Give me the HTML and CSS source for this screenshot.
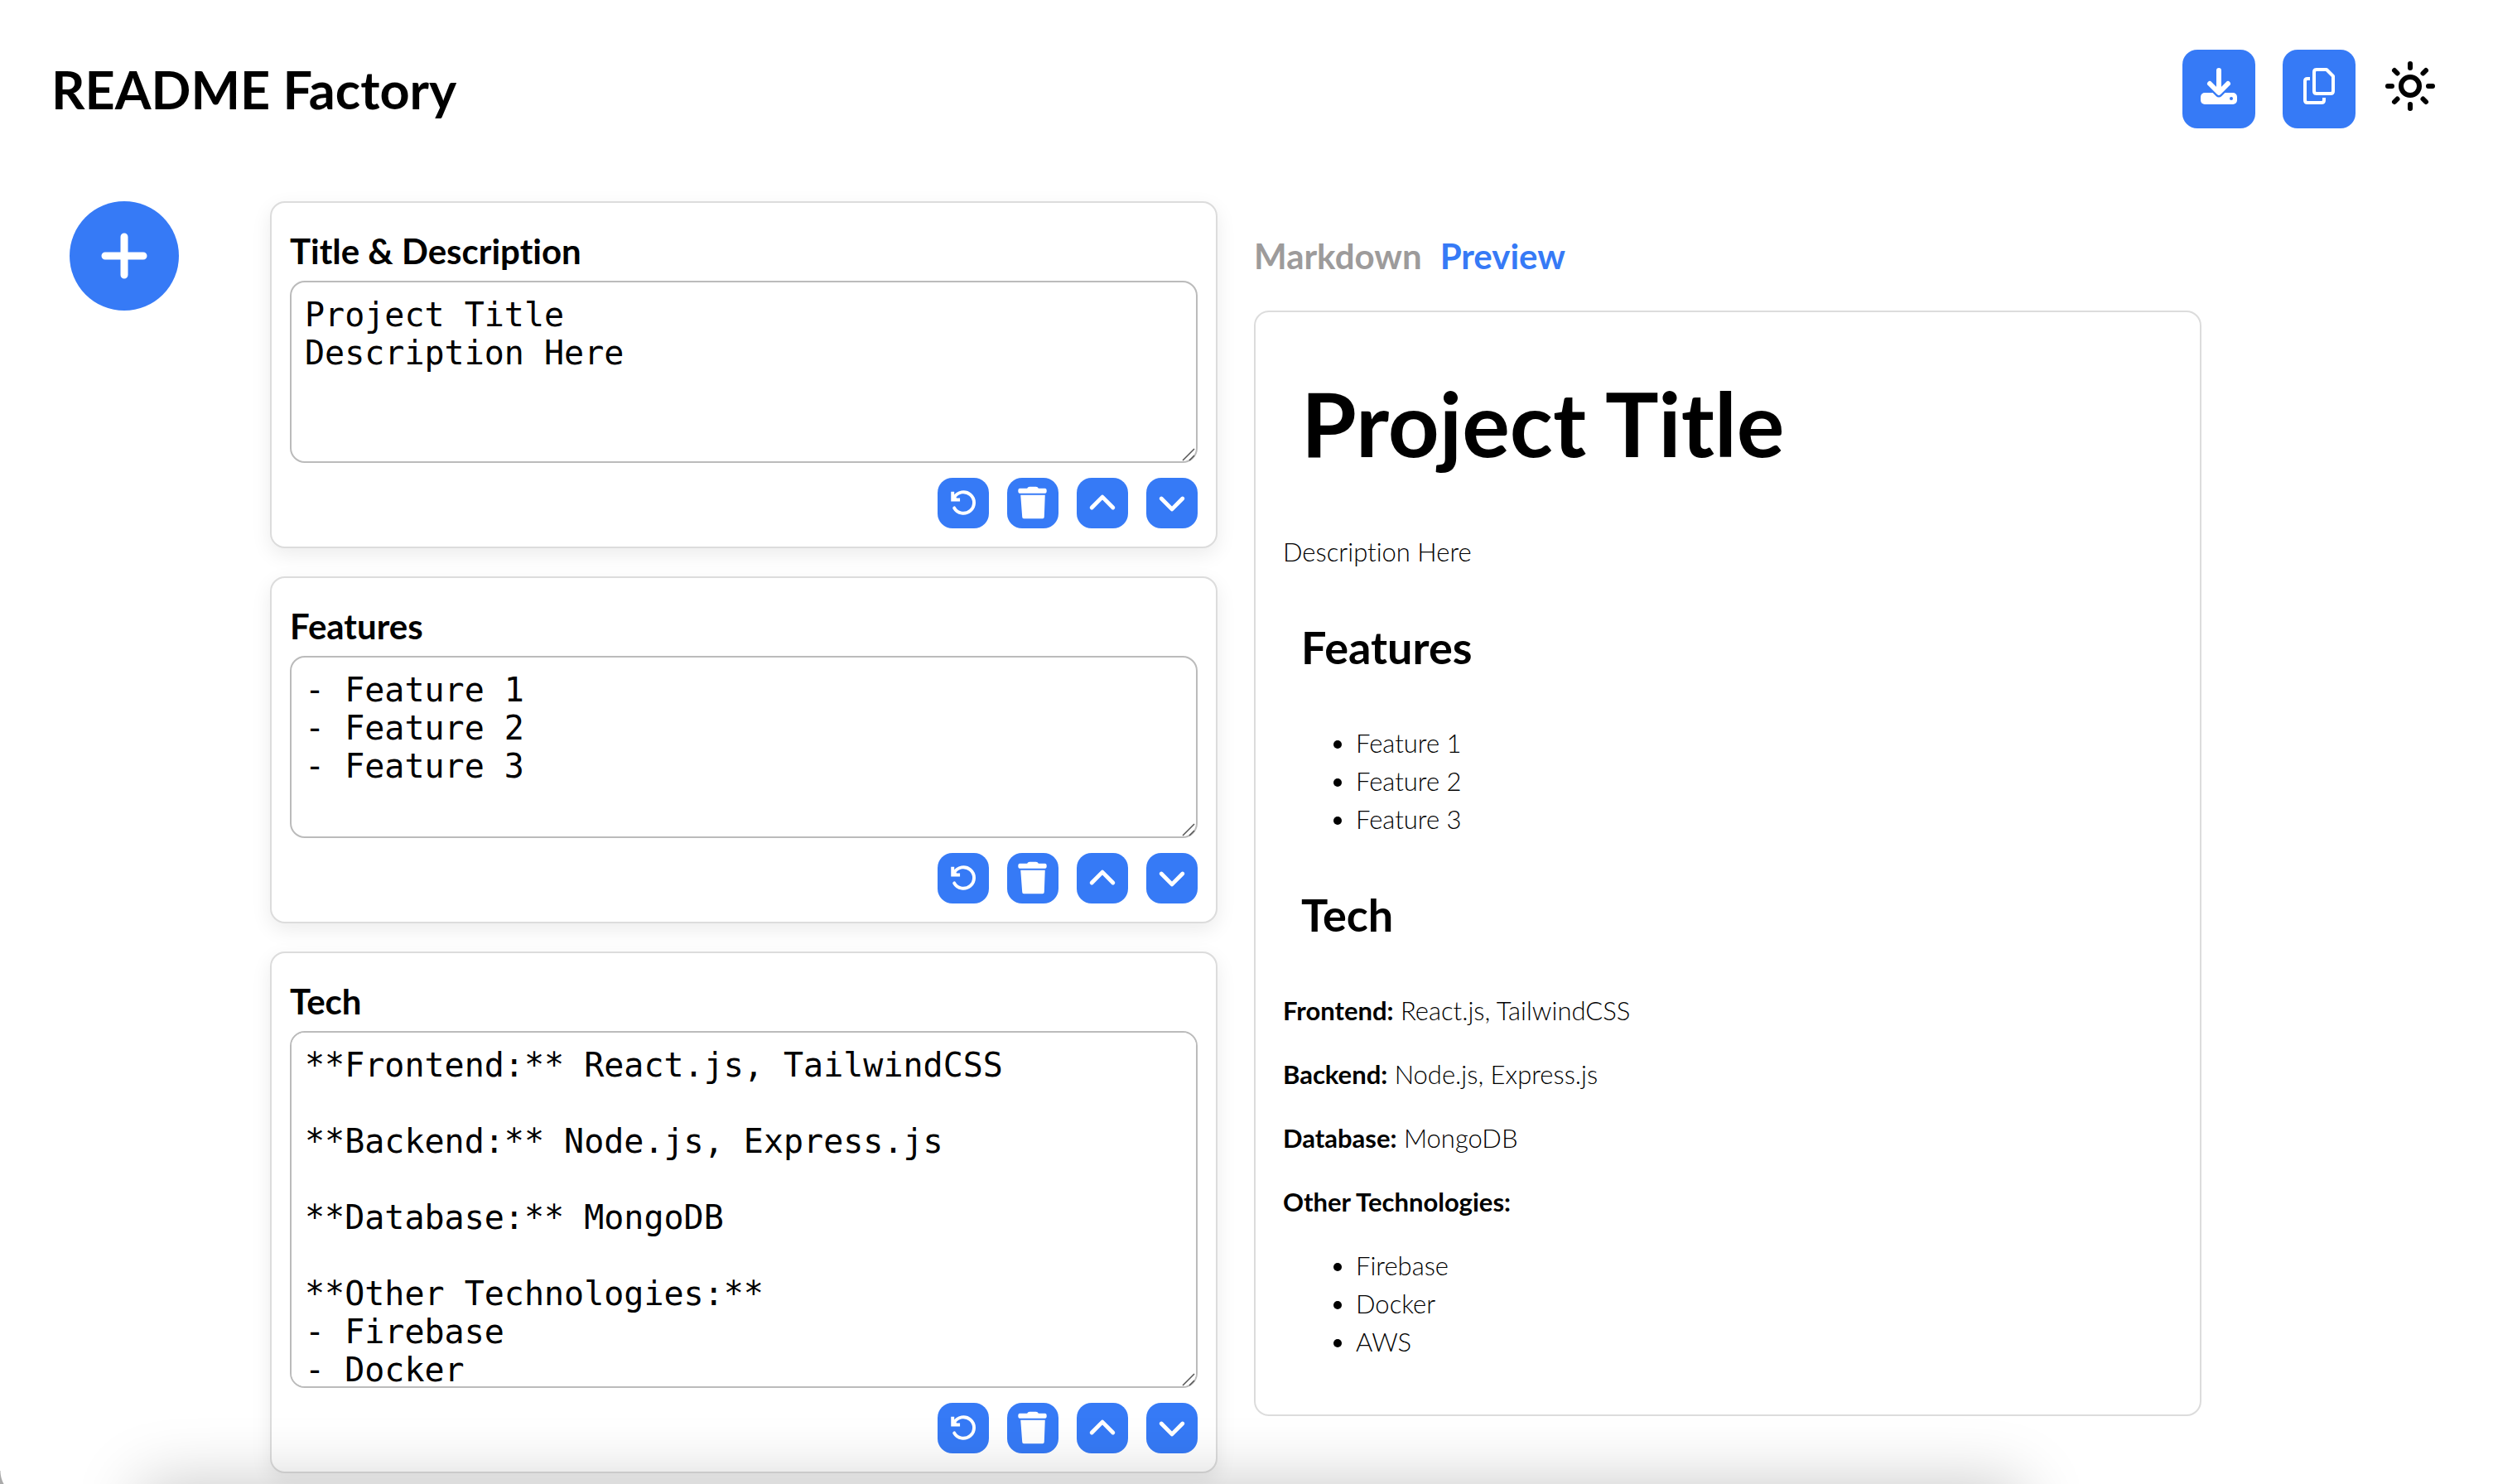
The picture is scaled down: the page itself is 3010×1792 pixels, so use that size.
FILE: index.html
```html
<!DOCTYPE html>
<html lang="en">
<head>
<meta charset="utf-8">
<meta name="viewport" content="width=device-width, initial-scale=1">
<title>README Factory</title>
<link rel="stylesheet" href="styles.css">
</head>
<body>
<svg class="sprite" aria-hidden="true">
  <symbol id="reset" viewBox="0 0 62 62">
    <path d="M20 37a13 13 0 1 0 0-13" fill="none" stroke="currentColor" stroke-width="4" stroke-linecap="round"/>
    <path d="M16 17h4v5l3 3h4v4H16z" fill="currentColor"/>
  </symbol>
  <symbol id="trash" viewBox="0 0 62 62">
    <path d="M15 13h9q1-2 3-2h8q2 0 3 2h8q2 0 2 3t-2 3H15q-2 0-2-3t2-3zM16 21h30l-1 27q0 2-2 2H20q-2 0-2-2z" fill="currentColor"/>
  </symbol>
  <symbol id="up" viewBox="0 0 62 62">
    <path d="M18 36.500 31 23.500 44 36.500" fill="none" stroke="currentColor" stroke-width="5" stroke-linecap="round" stroke-linejoin="round"/>
  </symbol>
  <symbol id="down" viewBox="0 0 62 62">
    <path d="M18 25.500 31 38.500 44 25.500" fill="none" stroke="currentColor" stroke-width="5" stroke-linecap="round" stroke-linejoin="round"/>
  </symbol>
  <symbol id="grip" viewBox="0 0 16 16">
    <path d="M1 15 15 1M9 15l6-6" fill="none" stroke="#555" stroke-width="1.500"/>
  </symbol>
</svg>

<header class="header">
  <h1 class="brand">README Factory</h1>
  <div class="actions">
    <button class="action" type="button" aria-label="Download">
      <svg viewBox="0 0 44 44">
        <rect x="0" y="30" width="44" height="14" rx="5" fill="currentColor"/>
        <path class="cutout" d="M11 20l11 11 11-11" fill="none" stroke-width="9" stroke-linejoin="round"/>
        <path d="M22 3v26M11 19l11 11 11-11" fill="none" stroke="currentColor" stroke-width="6" stroke-linecap="round" stroke-linejoin="round"/>
        <circle class="dot" cx="37" cy="37" r="2"/>
      </svg>
    </button>
    <button class="action" type="button" aria-label="Copy">
      <svg viewBox="0 0 44 44">
        <path d="M19 2h12l8 8v18q0 3-3 3H19q-3 0-3-3V5q0-3 3-3zM11 13H8q-3 0-3 3v23q0 3 3 3h17q3 0 3-3v-3" fill="none" stroke="currentColor" stroke-width="4" stroke-linejoin="round"/>
      </svg>
    </button>
    <button class="theme" type="button" aria-label="Toggle theme">
      <svg viewBox="-30 -30 60 60" fill="none" stroke="currentColor" stroke-linecap="round">
        <circle r="11" stroke-width="6"/>
        <path d="M0-27v5M0 27v-5M-27 0h5M27 0h-5M-19-19l3.500 3.500M19-19l-3.500 3.500M-19 19l3.500-3.500M19 19l-3.500-3.500" stroke-width="6"/>
      </svg>
    </button>
  </div>
</header>

<main class="workspace">
  <button class="add" type="button" aria-label="Add section">
    <svg viewBox="0 0 132 132"><path d="M66 43v46M43 66h46" stroke="currentColor" stroke-width="9" stroke-linecap="round"/></svg>
  </button>

  <div class="editor">
    <section class="card">
      <label class="card-title" for="intro">Title &amp; Description</label>
      <div class="field">
        <textarea id="intro" rows="4" spellcheck="false">Project Title
Description Here</textarea>
        <svg class="grip" aria-hidden="true"><use href="#grip"/></svg>
      </div>
      <div class="tools">
        <button type="button" aria-label="Reset"><svg><use href="#reset"/></svg></button>
        <button type="button" aria-label="Delete"><svg><use href="#trash"/></svg></button>
        <button type="button" aria-label="Move up"><svg><use href="#up"/></svg></button>
        <button type="button" aria-label="Move down"><svg><use href="#down"/></svg></button>
      </div>
    </section>

    <section class="card">
      <label class="card-title" for="features">Features</label>
      <div class="field">
        <textarea id="features" rows="4" spellcheck="false">- Feature 1
- Feature 2
- Feature 3</textarea>
        <svg class="grip" aria-hidden="true"><use href="#grip"/></svg>
      </div>
      <div class="tools">
        <button type="button" aria-label="Reset"><svg><use href="#reset"/></svg></button>
        <button type="button" aria-label="Delete"><svg><use href="#trash"/></svg></button>
        <button type="button" aria-label="Move up"><svg><use href="#up"/></svg></button>
        <button type="button" aria-label="Move down"><svg><use href="#down"/></svg></button>
      </div>
    </section>

    <section class="card">
      <label class="card-title" for="tech">Tech</label>
      <div class="field">
        <textarea id="tech" class="tall" spellcheck="false">**Frontend:** React.js, TailwindCSS

**Backend:** Node.js, Express.js

**Database:** MongoDB

**Other Technologies:**
- Firebase
- Docker
- AWS</textarea>
        <svg class="grip" aria-hidden="true"><use href="#grip"/></svg>
      </div>
      <div class="tools">
        <button type="button" aria-label="Reset"><svg><use href="#reset"/></svg></button>
        <button type="button" aria-label="Delete"><svg><use href="#trash"/></svg></button>
        <button type="button" aria-label="Move up"><svg><use href="#up"/></svg></button>
        <button type="button" aria-label="Move down"><svg><use href="#down"/></svg></button>
      </div>
    </section>
  </div>

  <div class="output">
    <div class="tabs">
      <button class="tab" type="button">Markdown</button>
      <button class="tab active" type="button">Preview</button>
    </div>
    <article class="preview">
      <h1>Project Title</h1>
      <p>Description Here</p>
      <h2>Features</h2>
      <ul>
        <li>Feature 1</li>
        <li>Feature 2</li>
        <li>Feature 3</li>
      </ul>
      <h2>Tech</h2>
      <p><strong>Frontend:</strong> React.js, TailwindCSS</p>
      <p><strong>Backend:</strong> Node.js, Express.js</p>
      <p><strong>Database:</strong> MongoDB</p>
      <p><strong>Other Technologies:</strong></p>
      <ul>
        <li>Firebase</li>
        <li>Docker</li>
        <li>AWS</li>
      </ul>
    </article>
  </div>
</main>
<div class="dock-shadow" aria-hidden="true"></div>
<div class="window-corner" aria-hidden="true"></div>
</body>
</html>
```

FILE: styles.css
```css
:root {
  --accent: #367af6;
  --line: #dcdcdc;
  --radius: 18px;
}

* { box-sizing: border-box; }

html { overflow: hidden; }

body {
  margin: 0;
  background: #fff;
  color: #000;
  font-family: Lato, "Liberation Sans", sans-serif;
  font-size: 31px;
  font-variant-ligatures: none;
  line-height: 46px;
}

button {
  padding: 0;
  border: 0;
  background: none;
  color: inherit;
  font: inherit;
  cursor: pointer;
}

svg { display: block; }
.sprite { display: none; }

/* Header */
.header {
  display: flex;
  align-items: center;
  justify-content: space-between;
  padding: 60px 70px 0 62px;
}

.brand {
  margin: 0;
  font-size: 63px;
  line-height: 76px;
  font-weight: 700;
}

.actions {
  display: flex;
  align-items: flex-start;
  gap: 33px;
}

.action {
  padding: 22px 22px 29px;
  border-radius: var(--radius);
  background: var(--accent);
  color: #fff;
}

.action svg { width: 44px; height: 44px; }
.cutout { stroke: var(--accent); }
.dot { fill: var(--accent); }

.theme { padding: 14px 0 0 3px; }
.theme svg { width: 60px; height: 60px; }

/* Workspace */
.workspace {
  display: grid;
  grid-template-columns: 198px minmax(0, 1fr) minmax(0, 1fr);
  column-gap: 44px;
  align-items: start;
  padding: 88px 352px 14px 84px;
}

.add {
  width: 132px;
  height: 132px;
  border-radius: 50%;
  background: var(--accent);
  color: #fff;
}

.editor {
  display: grid;
  gap: 34px;
}

.card {
  padding: 33px 22px 22px;
  border: 2px solid var(--line);
  border-radius: var(--radius);
  background: #fff;
  box-shadow: 0 8px 24px rgba(0, 0, 0, 0.08);
}

.card-title {
  display: block;
  margin-bottom: 11px;
  font-size: 42px;
  line-height: 50px;
  font-weight: 700;
}

.field { position: relative; }

textarea {
  display: block;
  width: 100%;
  padding: 16px;
  border: 2px solid #bbb;
  border-radius: var(--radius);
  background: #fff;
  color: #000;
  font: 40px/46px "DejaVu Sans Mono", monospace;
  resize: none;
  scrollbar-width: none;
}

.tall { height: 431px; }

.grip {
  position: absolute;
  right: 3px;
  bottom: 2px;
  width: 16px;
  height: 16px;
}

.tools {
  display: flex;
  justify-content: flex-end;
  gap: 22px;
  margin-top: 18px;
}

.tools button {
  border-radius: var(--radius);
  background: var(--accent);
  color: #fff;
}

.tools svg { width: 62px; height: 61px; }

/* Output */
.output { padding-top: 41px; }

.tabs {
  display: flex;
  gap: 22px;
  margin-bottom: 41px;
}

.tab {
  color: #9d9b9b;
  font-size: 42px;
  line-height: 50px;
  font-weight: 700;
}

.tab.active { color: var(--accent); }

.preview {
  padding: 68px 33px 65px;
  border: 2px solid var(--line);
  border-radius: var(--radius);
  font-weight: 300;
}

.preview h1,
.preview h2 {
  padding-left: 22px;
  font-weight: 700;
}

.preview h1 {
  margin: 0 0 68px;
  font-size: 108px;
  line-height: 130px;
}

.preview h2 {
  margin: 60px 0;
  font-size: 54px;
  line-height: 65px;
}

.preview p { margin: 0 0 31px; }

.preview ul {
  margin: 0;
  padding-left: 88px;
}

.preview strong { font-weight: 700; }

/* Soft shadow rising from below the window */
.dock-shadow {
  position: fixed;
  top: 100%;
  left: 170px;
  right: 570px;
  height: 200px;
  box-shadow: 0 0 80px rgba(0, 0, 0, 0.22);
  pointer-events: none;
}

.window-corner {
  position: fixed;
  left: 0;
  bottom: 0;
  width: 6px;
  height: 16px;
  background: radial-gradient(circle at 34px 0, transparent 33px, #aaa 34px);
  pointer-events: none;
}
```
